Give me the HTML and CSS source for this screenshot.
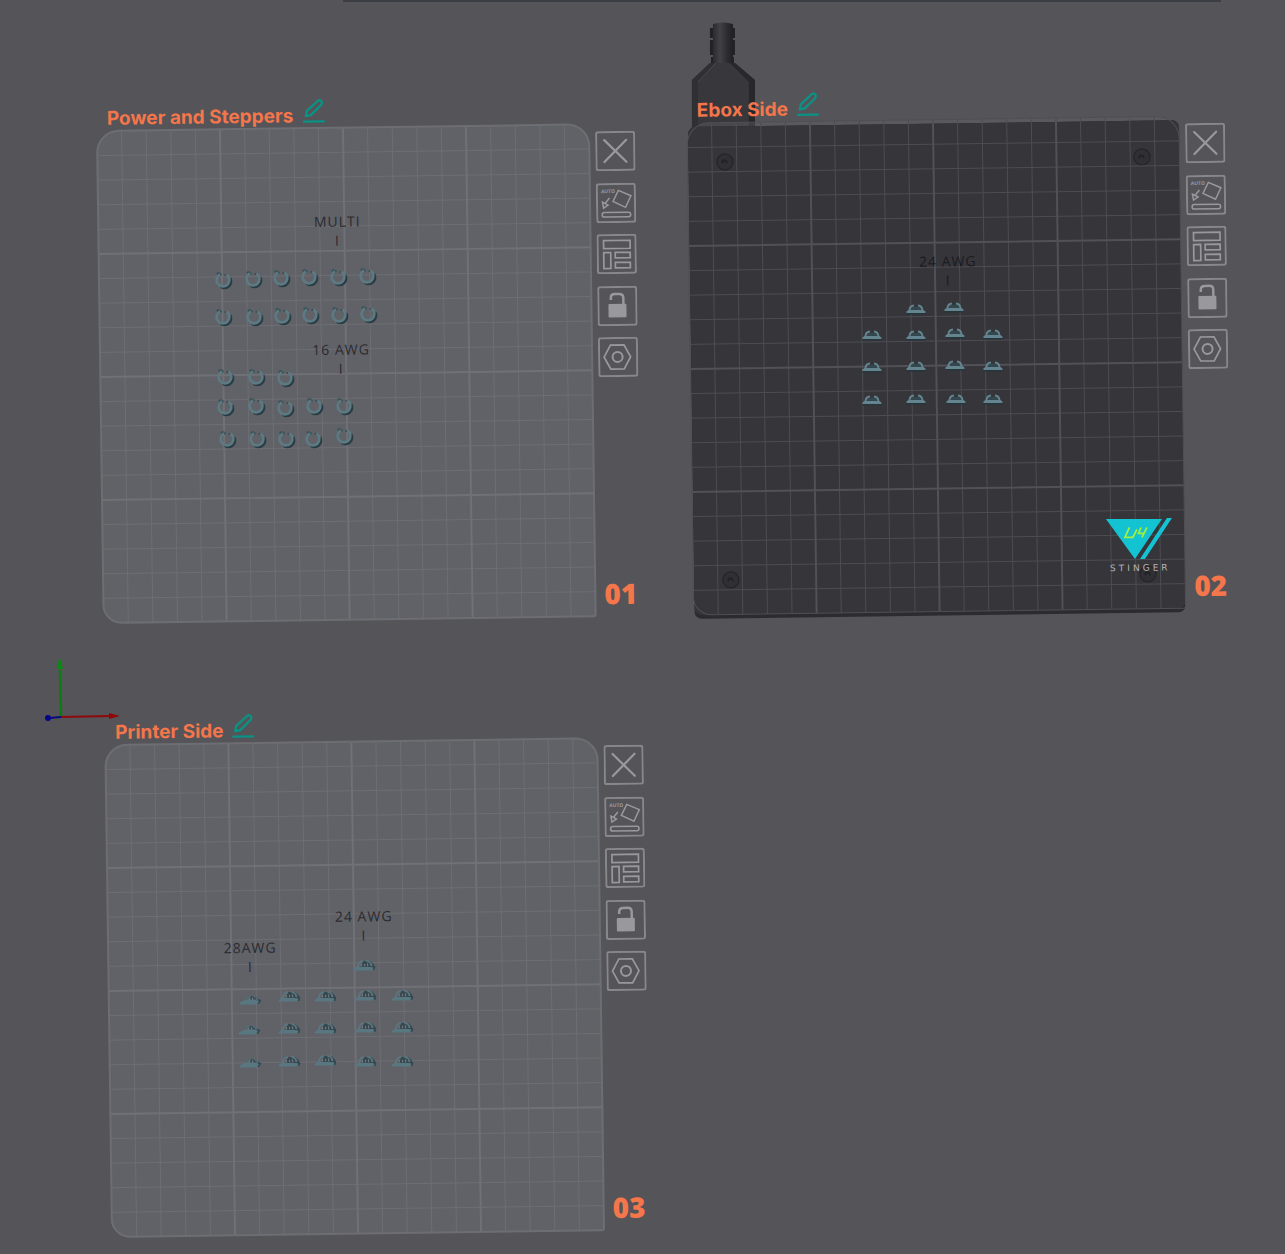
FILE: index.html
```html
<!DOCTYPE html>
<html lang="en">
<head>
<meta charset="utf-8">
<meta name="viewport" content="width=device-width, initial-scale=1">
<title>Build plates</title>
<link rel="stylesheet" href="styles.css">
</head>
<body>
<svg class="defs" aria-hidden="true">
  <defs>
    <clipPath id="bed-clip"><path d="M22 0H470a22 22 0 0 1 22 22V490a2 2 0 0 1-2 2H18a18 18 0 0 1-18-18V22a22 22 0 0 1 22-22z"/></clipPath>
    <linearGradient id="neck" x1="0" x2="1" y1="0" y2="0">
      <stop offset="0" stop-color="#2b2a2e"/><stop offset=".35" stop-color="#424146"/><stop offset=".7" stop-color="#2d2c30"/><stop offset="1" stop-color="#212024"/>
    </linearGradient>
    <symbol id="grid" viewBox="0 0 500 500">
      <path class="minor" d="M25 0v500M50 0v500M75 0v500M100 0v500M150 0v500M175 0v500M200 0v500M225 0v500M275 0v500M300 0v500M325 0v500M350 0v500M400 0v500M425 0v500M450 0v500M475 0v500M0 25h500M0 50h500M0 75h500M0 100h500M0 150h500M0 175h500M0 200h500M0 225h500M0 275h500M0 300h500M0 325h500M0 350h500M0 400h500M0 425h500M0 450h500M0 475h500"/>
      <path class="major" d="M125 0v500M250 0v500M375 0v500M0 125h500M0 250h500M0 375h500"/>
    </symbol>
    <path id="outline" d="M22 0H470a22 22 0 0 1 22 22V490a2 2 0 0 1-2 2H18a18 18 0 0 1-18-18V22a22 22 0 0 1 22-22z"/>
    <g id="ring">
      <path d="M5.500 -3.500A6.500 6.500 0 0 1 -4 5" transform="translate(1.700 1.700)" fill="none" stroke="#2a3d44" stroke-width="2.500"/>
      <path d="M-7 -7l3 -1 3 2-1 2-3 0z" fill="#3a535b"/>
      <path d="M1 -5l1.500 -1 1 1-1 1z" fill="#33494f"/>
      <path d="M-3 -5.700A6.400 6.400 0 1 0 3.500 -5.400" fill="none" stroke="#5c7a83" stroke-width="2.600"/>
    </g>
    <g id="clip">
      <path d="M-9.500 0h19v1.500h-19z" fill="#26353b"/>
      <path d="M-5 -3v-3h10v3z" fill="#33474e"/>
      <path d="M-9.500 0v-1.500l2-1.500h15l2 1.500V0z" fill="#64858f"/>
      <path d="M-6.500 -2v-1a5 5 0 0 1 4.500-4.500M6.500 -2v-1a5 5 0 0 0-4.500-4.500" fill="none" stroke="#64858f" stroke-width="1.900"/>
    </g>
    <g id="wing">
      <path d="M-4 -3l3-6h7l3 3 2 3-1 3H8z" fill="#35484f"/>
      <path d="M-10.500 0.500v-2l3-1.500h15l1.500 1-1 2.500z" fill="#587781"/>
      <path d="M-6.500 -3a6 6 0 0 1 5-6M2 -9a5 5 0 0 1 5 5" fill="none" stroke="#587781" stroke-width="2"/>
      <path d="M-3.500 -6l1 2.500M0 -6l.5 2.500M3 -6.500l.5 3" stroke="#77787d" stroke-width="1.200"/>
    </g>
    <g id="slim">
      <path d="M-2 -3l3-5h4l3 3 3 1-2 4z" fill="#35484f"/>
      <path d="M-10.500 0.500v-2l4-2 3-1h10l2 2-2 3z" fill="#587781"/>
      <path d="M-4 -4a4 4 0 0 1 4-3.500M3 -7.500a4 4 0 0 1 4 4" fill="none" stroke="#4f6c75" stroke-width="1.700"/>
      <path d="M-1 -6l.5 2M2 -6.500l.5 2.500" stroke="#77787d" stroke-width="1.200"/>
    </g>
    <g id="screw">
      <circle r="8" fill="#302f34" stroke="#262529" stroke-width="1.300"/>
      <path d="M-3 2a3 3 0 1 1 5 0l-2-3z" fill="#222125"/>
    </g>
    <symbol id="i-edit" viewBox="0 0 24 24"><path d="M2 22.500h20M4 17l1-5L16 2q2-1.500 3.500 0t0 4L9 16z" fill="none" stroke="currentColor" stroke-width="2.300" stroke-linecap="round" stroke-linejoin="round"/></symbol>
    <symbol id="i-close" viewBox="0 0 40 40"><path d="M9 9l22 22M31 9L9 31" fill="none" stroke="currentColor" stroke-width="2.200" stroke-linecap="round"/></symbol>
    <symbol id="i-orient" viewBox="0 0 40 40">
      <text x="5" y="10" class="auto">AUTO</text>
      <path d="M22.500 7.500L35 13 29.500 24.500 17 18.500zM13.500 15L9 20.500M12 22l-5.500-3 1 6z" fill="none" stroke="currentColor" stroke-width="1.500"/>
      <rect x="6" y="29.500" width="28.500" height="4.500" rx="2.200" fill="none" stroke="currentColor" stroke-width="1.500"/>
    </symbol>
    <symbol id="i-arrange" viewBox="0 0 40 40"><path d="M7 6.500h26.500v8H7zM7 18.500h7v16H7zM18.500 18.500h15v5.500h-15zM18.500 28.500h15v5.500h-15z" fill="none" stroke="currentColor" stroke-width="1.700"/></symbol>
    <symbol id="i-lock" viewBox="0 0 40 40"><path d="M13.500 14v-2q0-4 4-4h4.500q4 0 4 4v7" fill="none" stroke="currentColor" stroke-width="2.500"/><rect x="11" y="18" width="18" height="13.500" rx="1" fill="currentColor"/></symbol>
    <symbol id="i-settings" viewBox="0 0 40 40"><path d="M6 20l6.500-12h13.500l6.500 12-6.500 12H12.500z" fill="none" stroke="currentColor" stroke-width="1.700"/><circle cx="19.500" cy="20" r="5" fill="none" stroke="currentColor" stroke-width="2"/></symbol>
  </defs>
</svg>

<div class="topbar"></div>
<main class="viewport">
  <svg class="axes" viewBox="0 0 90 80" role="img" aria-label="Axes">
    <path d="M21 67L20 20" stroke="#0b7d10" stroke-width="2.500"/><path d="M19.500 6l3.500 13h-6z" fill="#0a8a10"/>
    <path d="M21 67l50-1" stroke="#8e0a0a" stroke-width="2"/><path d="M80 66l-11-3v6z" fill="#900808"/>
    <path d="M21 67l-12 1" stroke="#0a0a78" stroke-width="2"/><circle cx="8" cy="68" r="3" fill="#05058c"/>
  </svg>

  <div class="scene">
    <section class="plate">
      <header class="plate-head">
        <h2>Power and Steppers</h2>
        <button class="edit" aria-label="Rename plate"><svg><use href="#i-edit"/></svg></button>
      </header>
      <svg class="bed" viewBox="0 0 492 492">
        <g clip-path="url(#bed-clip)"><rect class="surface" width="492" height="492"/><use href="#grid" width="492" height="492"/></g>
        <use class="edge" href="#outline"/>
        <g class="label"><text x="239" y="99">MULTI</text><text x="239" y="118">I</text><text x="241" y="227">16 AWG</text><text x="241" y="246">I</text></g>
        <g transform="rotate(.78)">
          <use href="#ring" x="126" y="149"/><use href="#ring" x="156" y="148"/><use href="#ring" x="184" y="147"/><use href="#ring" x="212" y="146"/><use href="#ring" x="241" y="146"/><use href="#ring" x="270" y="145"/>
          <use href="#ring" x="126" y="186"/><use href="#ring" x="157" y="186"/><use href="#ring" x="185" y="185"/><use href="#ring" x="213" y="184"/><use href="#ring" x="242" y="184"/><use href="#ring" x="271" y="183"/>
          <use href="#ring" x="128" y="246"/><use href="#ring" x="159" y="246"/><use href="#ring" x="188" y="247"/>
          <use href="#ring" x="128" y="276"/><use href="#ring" x="159" y="275"/><use href="#ring" x="188" y="277"/><use href="#ring" x="217" y="275"/><use href="#ring" x="247" y="275"/>
          <use href="#ring" x="130" y="308"/><use href="#ring" x="160" y="308"/><use href="#ring" x="189" y="308"/><use href="#ring" x="216" y="308"/><use href="#ring" x="247" y="305"/>
        </g>
      </svg>
      <aside class="side">
        <div class="tools">
          <button aria-label="Remove plate"><svg><use href="#i-close"/></svg></button>
          <button aria-label="Auto orient"><svg><use href="#i-orient"/></svg></button>
          <button aria-label="Arrange"><svg><use href="#i-arrange"/></svg></button>
          <button aria-label="Lock plate"><svg><use href="#i-lock"/></svg></button>
          <button aria-label="Plate settings"><svg><use href="#i-settings"/></svg></button>
        </div>
        <strong class="number">01</strong>
      </aside>
    </section>

    <section class="plate dark">
      <header class="plate-head">
        <h2>Ebox Side</h2>
        <button class="edit" aria-label="Rename plate"><svg><use href="#i-edit"/></svg></button>
      </header>
      <svg class="bed" viewBox="0 0 492 492">
        <g transform="rotate(.78)">
          <path d="M23 -95h3v10h-3zM23 -83h3v15h-3zM45 -95h3v10h-3zM45 -83h3v15h-3zM24 -66h23v6h-23z" fill="#222125"/>
          <path d="M5 -43L23 -60H48L68 -43V4H5z" fill="#38373c"/>
          <path d="M5 -43L23 -60h6L11 -41V4H5z" fill="#302f33"/><path d="M11 -41L29 -60" stroke="#4a494f" stroke-width="1"/>
          <path d="M62 -41L43 -60h5L68 -43V4h-6z" fill="#28272b"/>
          <path d="M26 -99q10-3 20 0v39H26z" fill="url(#neck)"/>
        </g>
        <rect class="surface" width="492" height="10" clip-path="url(#bed-clip)" fill-opacity=".4"/>
        <rect x="1" y="4" width="491" height="492" rx="7" fill="#2c2b2f"/>
        <rect x="1" y="4" width="491" height="488" rx="7" fill="#36353a"/>
        <g transform="rotate(.78)"><use href="#screw" x="38" y="39"/><use href="#screw" x="455" y="34"/><use href="#screw" x="44" y="457"/><use href="#screw" x="461" y="451"/></g>
        <g clip-path="url(#bed-clip)"><use href="#grid" width="492" height="492"/></g>
        <use class="edge" href="#outline"/>
        <g class="label"><text x="259" y="147">24 AWG</text><text x="259" y="166">I</text></g>
        <g transform="rotate(.78)">
          <use href="#clip" x="229" y="190"/><use href="#clip" x="267" y="188"/>
          <use href="#clip" x="185" y="216"/><use href="#clip" x="229" y="216"/><use href="#clip" x="268" y="214"/><use href="#clip" x="306" y="215"/>
          <use href="#clip" x="185" y="248"/><use href="#clip" x="229" y="247"/><use href="#clip" x="268" y="246"/><use href="#clip" x="306" y="247"/>
          <use href="#clip" x="185" y="281"/><use href="#clip" x="229" y="280"/><use href="#clip" x="269" y="280"/><use href="#clip" x="306" y="280"/>
          <path d="M419 396h56l-27 40zM480 395h5l-27 41h-5z" fill="#13c3d1"/>
          <path d="M442.500 404.500L438 414.500h8l4-8M454 404.500l-2.500 6h6M460 404.500l-5 10" fill="none" stroke="#a5f03c" stroke-width="1.700"/>
        </g>
        <text class="brand" x="417" y="454">STINGER</text>
      </svg>
      <aside class="side">
        <div class="tools">
          <button aria-label="Remove plate"><svg><use href="#i-close"/></svg></button>
          <button aria-label="Auto orient"><svg><use href="#i-orient"/></svg></button>
          <button aria-label="Arrange"><svg><use href="#i-arrange"/></svg></button>
          <button aria-label="Lock plate"><svg><use href="#i-lock"/></svg></button>
          <button aria-label="Plate settings"><svg><use href="#i-settings"/></svg></button>
        </div>
        <strong class="number">02</strong>
      </aside>
    </section>

    <section class="plate">
      <header class="plate-head">
        <h2>Printer Side</h2>
        <button class="edit" aria-label="Rename plate"><svg><use href="#i-edit"/></svg></button>
      </header>
      <svg class="bed" viewBox="0 0 492 492">
        <g clip-path="url(#bed-clip)"><rect class="surface" width="492" height="492"/><use href="#grid" width="492" height="492"/></g>
        <use class="edge" href="#outline"/>
        <g class="label"><text x="142" y="210">28AWG</text><text x="142" y="229">I</text><text x="256" y="180">24 AWG</text><text x="256" y="199">I</text></g>
        <g transform="rotate(.78)">
          <use href="#wing" x="259" y="225"/>
          <use href="#slim" x="145" y="259"/><use href="#wing" x="184" y="256"/><use href="#wing" x="220" y="256"/><use href="#wing" x="260" y="255"/><use href="#wing" x="297" y="255"/>
          <use href="#slim" x="144" y="289"/><use href="#wing" x="184" y="288"/><use href="#wing" x="220" y="288"/><use href="#wing" x="260" y="287"/><use href="#wing" x="297" y="287"/>
          <use href="#slim" x="145" y="322"/><use href="#wing" x="184" y="321"/><use href="#wing" x="220" y="320"/><use href="#wing" x="260" y="321"/><use href="#wing" x="297" y="321"/>
        </g>
      </svg>
      <aside class="side">
        <div class="tools">
          <button aria-label="Remove plate"><svg><use href="#i-close"/></svg></button>
          <button aria-label="Auto orient"><svg><use href="#i-orient"/></svg></button>
          <button aria-label="Arrange"><svg><use href="#i-arrange"/></svg></button>
          <button aria-label="Lock plate"><svg><use href="#i-lock"/></svg></button>
          <button aria-label="Plate settings"><svg><use href="#i-settings"/></svg></button>
        </div>
        <strong class="number">03</strong>
      </aside>
    </section>
  </div>
</main>
</body>
</html>
```
FILE: styles.css
```css
* { box-sizing: border-box; }
body {
  margin: 0;
  min-height: 100vh;
  background: #555459;
  font-family: "Open Sans", "Noto Sans", sans-serif;
  display: flex;
  flex-direction: column;
}
.defs { position: absolute; width: 0; height: 0; }
.topbar { height: 2px; margin: 0 64px 0 343px; background: #3b3e44; }
.viewport {
  flex: 1;
  position: relative;
  overflow: hidden;
  padding: 97px 0 0 97px;
}
.axes { position: absolute; left: 40px; top: 648px; width: 90px; height: 80px; }

.scene {
  display: grid;
  grid-template-columns: repeat(auto-fill, 538px);
  gap: 90px 52px;
  transform: rotate(-.78deg);
  transform-origin: 0 32px;
}
.plate {
  --line: #6d6e73;
  --line-major: #707176;
  display: grid;
  grid-template-columns: 1fr 40px;
  grid-template-rows: 32px auto;
  column-gap: 6px;
}
.plate.dark {
  --line: #4d4d54;
  --line-major: #515158;
}
.plate-head {
  grid-column: 1 / -1;
  position: relative;
  z-index: 1;
  display: flex;
  align-items: flex-end;
  gap: 8px;
  padding: 0 0 2px 10px;
}
.plate-head h2 {
  margin: 0;
  font: 700 19px/20px Inter, "Open Sans", sans-serif;
  color: #f4764a;
}
button { padding: 0; border: 0; background: none; cursor: pointer; }
button svg { display: block; width: 100%; height: 100%; }
.edit { width: 24px; height: 24px; margin-bottom: 3px; color: #0a9284; }

.bed { width: 100%; aspect-ratio: 1; overflow: visible; display: block; }
.surface { fill: #616267; }
.minor { fill: none; stroke: var(--line); stroke-width: 1px; }
.major { fill: none; stroke: var(--line-major); stroke-width: 2px; }
.edge { fill: none; stroke: #6d6e73; stroke-width: 2px; }
.dark .edge { stroke: #4f4f56; stroke-width: 1px; }

.label {
  font: 500 14px "Open Sans", sans-serif;
  letter-spacing: 1px;
  text-anchor: middle;
  fill: #2b2a2f;
}
.dark .label { fill: #1b1a1e; }
.brand { font: 9px "DejaVu Sans", sans-serif; letter-spacing: 3px; fill: #b4b4b8; }

.side {
  display: flex;
  flex-direction: column;
  justify-content: space-between;
  padding: 7px 0 9px;
}
.tools {
  display: flex;
  flex-direction: column;
  justify-content: space-between;
  height: 246px;
}
.tools button {
  width: 40px;
  height: 40px;
  color: #99989d;
  border-radius: 3px;
  box-shadow: inset 0 0 0 2px #88878c;
}
.auto { font: 700 5px "Open Sans", sans-serif; fill: currentColor; }
.number { padding-left: 3px; font-size: 28px; font-weight: 800; line-height: 28px; color: #f4764a; }
```
